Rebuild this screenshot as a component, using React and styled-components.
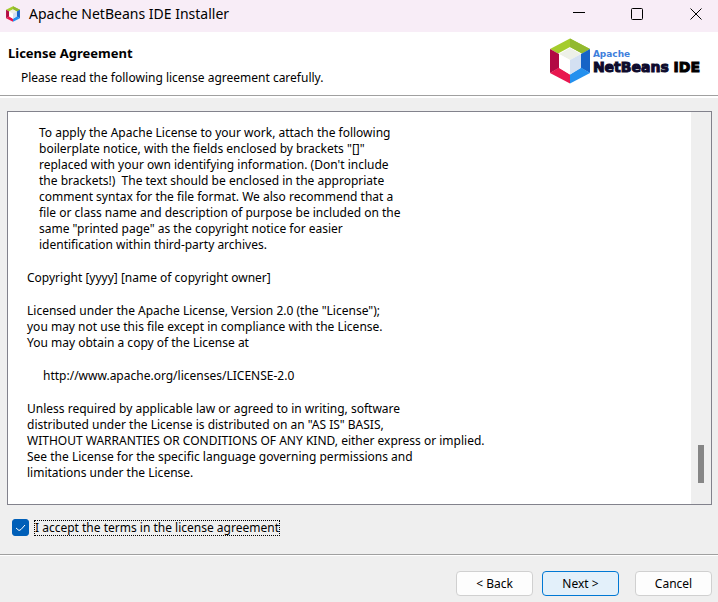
import React, { useState } from "react";
import styled, { createGlobalStyle } from "styled-components";

const Global = createGlobalStyle`
  * { box-sizing: border-box; }
  html, body, #root { height: 100%; }
  body {
    margin: 0;
    background: #efefef;
    color: #000;
    font: 12px/16px "Noto Sans", Tahoma, sans-serif;
  }
`;

const Window = styled.div`
  display: flex;
  flex-direction: column;
  min-height: 100%;
`;

const TitleBar = styled.header`
  display: flex;
  align-items: center;
  height: 32px;
  padding: 0 0 4px 5px;
  gap: 8px;
  background: #f8edf7;
`;

const Title = styled.h1`
  flex: 1;
  margin: 0;
  font: 400 14px/20px "Noto Sans", "Open Sans", sans-serif;
`;

const Captions = styled.div`
  display: flex;
`;

const Caption = styled.button`
  display: grid;
  place-items: center;
  width: 58px;
  height: 28px;
  padding: 0;
  border: 0;
  background: transparent;

  &:last-child { width: 44px; margin-left: 8px; }
`;

const Banner = styled.section`
  display: flex;
  justify-content: space-between;
  align-items: flex-start;
  height: 64px;
  padding: 6px 18px 0 8px;
  background: #fff;
  border-bottom: 1px solid #a0a0a0;
`;

const Heading = styled.h2`
  margin: 7px 0 9px;
  font-size: 13px;
  line-height: 16px;
  font-weight: 700;
`;

const Sub = styled.p`
  margin: 0 0 0 13px;
`;

const Brand = styled.div`
  display: flex;
  gap: 2px;
`;

const BrandText = styled.div`
  padding-top: 11px;
  color: #0d0a2c;
  font: 700 14px/16px "DejaVu Sans", sans-serif;
  -webkit-text-stroke: 1px;
  white-space: nowrap;
`;

const BrandTop = styled.div`
  color: #3f7fdc;
  font-size: 9px;
  line-height: 10px;
  -webkit-text-stroke: 0;
`;

const Product = styled.span`
  color: #000;
`;

const Main = styled.main`
  flex: 1;
  display: flex;
  flex-direction: column;
  border-top: 2px solid #fff;
  padding: 13px 6px 18px 7px;
`;

const License = styled.section`
  flex: 1;
  display: flex;
  border: 1px solid #82828c;
  background: #fff;
`;

const LicenseText = styled.div`
  flex: 1;
  display: flex;
  flex-direction: column;
  gap: 17px;
  padding: 13px 19px;
`;

const Para = styled.p`
  margin: 0;
  padding-left: ${(p) => p.$indent || 0}px;
  white-space: pre;
`;

const Track = styled.div`
  display: flex;
  flex-direction: column;
  justify-content: flex-end;
  align-items: flex-end;
  width: 20px;
  padding: 0 7px 21px 0;
  background: #efefef;
`;

const Thumb = styled.div`
  width: 6px;
  height: 38px;
  background: #868686;
`;

const Accept = styled.label`
  display: flex;
  align-items: center;
  align-self: flex-start;
  gap: 5px;
  margin: 14px 0 0 5px;
`;

const CheckWrap = styled.span`
  display: grid;
  width: 17px;
  height: 17px;

  > * { grid-area: 1 / 1; }
  > svg { pointer-events: none; }
`;

const Check = styled.input`
  appearance: none;
  width: 17px;
  height: 17px;
  margin: 0;
  border: 1px solid #005fb8;
  border-radius: 3px;
  background: #fff;

  &:checked { background: #005fb8; }
`;

const AcceptText = styled.span`
  border: 1px dotted #000;
  line-height: 14px;
`;

const Footer = styled.footer`
  display: flex;
  justify-content: flex-end;
  gap: 9px;
  padding: 16px 6px 6px;
  border-top: 1px solid #a0a0a0;
  box-shadow: inset 0 1px #fff;
`;

const Button = styled.button`
  width: 77px;
  height: 25px;
  padding: 0;
  border: 1px solid ${(p) => (p.$primary ? "#0078d4" : "#d0d0d0")};
  border-radius: 4px;
  background: ${(p) => (p.$primary ? "#e3f0fa" : "#fdfdfd")};
  color: #000;
  font: inherit;
`;

const Cancel = styled(Button)`
  margin-left: 7px;
`;

function Cube({ width, height }) {
  return (
    <svg width={width} height={height} viewBox="0 0 42 46" aria-hidden="true">
      <path d="M21 0.5 41 11 33 15.5 21 9 9 15.5 1 11Z" fill="#a5cc2c" />
      <path d="M21 0.5 41 11 33 15.5 21 9Z" fill="#92b92f" />
      <path d="M1 11 10 16V30L1 35Z" fill="#b20a43" />
      <path d="M1 35 10 29.500 21 36.500V45.500Z" fill="#e8174f" />
      <path d="M41 11 32 16V30L41 35Z" fill="#1764c6" />
      <path d="M41 35 32 29.500 21 36.500V45.500Z" fill="#2490ee" />
      <path d="M21 10 32 16 21 22 10 16Z" fill="#edf0e8" />
      <path d="M10 16 21 22V36.500L10 30Z" fill="#fff" />
      <path d="M32 16 21 22V36.500L32 30Z" fill="#d3e0f2" />
    </svg>
  );
}

const paragraphs = [
  {
    indent: 12,
    text: `To apply the Apache License to your work, attach the following
boilerplate notice, with the fields enclosed by brackets "[]"
replaced with your own identifying information. (Don't include
the brackets!)  The text should be enclosed in the appropriate
comment syntax for the file format. We also recommend that a
file or class name and description of purpose be included on the
same "printed page" as the copyright notice for easier
identification within third-party archives.`,
  },
  { text: "Copyright [yyyy] [name of copyright owner]" },
  {
    text: `Licensed under the Apache License, Version 2.0 (the "License");
you may not use this file except in compliance with the License.
You may obtain a copy of the License at`,
  },
  { indent: 16, text: "http://www.apache.org/licenses/LICENSE-2.0" },
  {
    text: `Unless required by applicable law or agreed to in writing, software
distributed under the License is distributed on an "AS IS" BASIS,
WITHOUT WARRANTIES OR CONDITIONS OF ANY KIND, either express or implied.
See the License for the specific language governing permissions and
limitations under the License.`,
  },
];

export default function App() {
  const [accepted, setAccepted] = useState(true);
  return (
    <Window>
      <Global />
      <TitleBar>
        <Cube width={16} height={16} />
        <Title>Apache NetBeans IDE Installer</Title>
        <Captions>
          <Caption aria-label="Minimize">
            <svg width="12" height="12" stroke="#000"><path d="M0 4.500H12" /></svg>
          </Caption>
          <Caption aria-label="Maximize">
            <svg width="12" height="12" stroke="#000" fill="none"><rect x="0.500" y="0.500" width="11" height="11" rx="1" /></svg>
          </Caption>
          <Caption aria-label="Close">
            <svg width="12" height="12" stroke="#000"><path d="M0.500 0.500 11.500 11.500M11.500 0.500 0.500 11.500" /></svg>
          </Caption>
        </Captions>
      </TitleBar>
      <Banner>
        <div>
          <Heading>License Agreement</Heading>
          <Sub>Please read the following license agreement carefully.</Sub>
        </div>
        <Brand>
          <Cube width={42} height={46} />
          <BrandText>
            <BrandTop>Apache</BrandTop>
            NetBeans <Product>IDE</Product>
          </BrandText>
        </Brand>
      </Banner>
      <Main>
        <License aria-label="License text">
          <LicenseText>
            {paragraphs.map((p) => (
              <Para key={p.text} $indent={p.indent}>{p.text}</Para>
            ))}
          </LicenseText>
          <Track><Thumb /></Track>
        </License>
        <Accept>
          <CheckWrap>
            <Check type="checkbox" checked={accepted} onChange={(e) => setAccepted(e.target.checked)} />
            {accepted && (
              <svg width="17" height="17" fill="none" stroke="#fff" aria-hidden="true">
                <path d="M4 9 7 11.500 9 10.500 13 6" />
              </svg>
            )}
          </CheckWrap>
          <AcceptText>I accept the terms in the license agreement</AcceptText>
        </Accept>
      </Main>
      <Footer>
        <Button>&lt; Back</Button>
        <Button $primary>Next &gt;</Button>
        <Cancel>Cancel</Cancel>
      </Footer>
    </Window>
  );
}
